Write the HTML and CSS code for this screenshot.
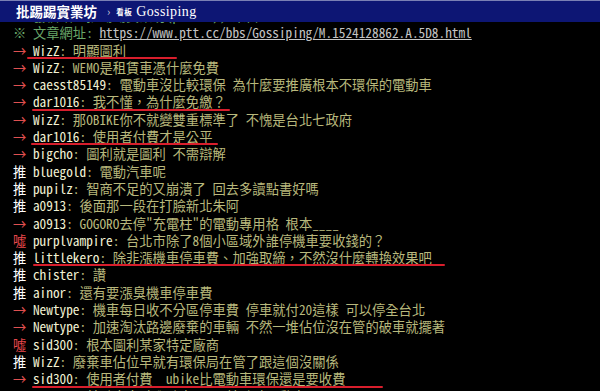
FILE: index.html
```html
<!DOCTYPE html>
<html lang="zh-Hant">
<head>
    <meta charset="UTF-8">
    <title>批踢踢實業坊 › 看板 Gossiping</title>
    <link rel="stylesheet" href="styles.css">
</head>
<body>

<header class="topbar">
    <a class="logo" href="#">批踢踢實業坊</a>
    <span class="sep">›</span>
    <a class="board" href="#"><span class="board-label">看板</span>Gossiping</a>
</header>

<div class="viewport">
<main class="article">
    <div class="line f2">※ 發信站: 批踢踢實業坊(ptt.cc), 來自: 180.177.40.55</div>
    <div class="line"><span class="f2">※ 文章網址: </span><a class="url" href="#">https://www.ptt.cc/bbs/Gossiping/M.1524128862.A.5D8.html</a></div>

    <div class="push ink ink-1"><span class="tag arrow">→ </span><span class="userid">WizZ</span><span class="content">: 明顯圖利</span></div>
    <div class="push"><span class="tag arrow">→ </span><span class="userid">WizZ</span><span class="content">: WEMO是租賃車憑什麼免費</span></div>
    <div class="push"><span class="tag arrow">→ </span><span class="userid">caesst85149</span><span class="content">: 電動車沒比較環保 為什麼要推廣根本不環保的電動車</span></div>
    <div class="push ink ink-2"><span class="tag arrow">→ </span><span class="userid">dar1016</span><span class="content">: 我不懂，為什麼免繳？</span></div>
    <div class="push"><span class="tag arrow">→ </span><span class="userid">WizZ</span><span class="content">: 那OBIKE你不就變雙重標準了 不愧是台北七政府</span></div>
    <div class="push ink ink-3"><span class="tag arrow">→ </span><span class="userid">dar1016</span><span class="content">: 使用者付費才是公平</span></div>
    <div class="push"><span class="tag arrow">→ </span><span class="userid">bigcho</span><span class="content">: 圖利就是圖利 不需辯解</span></div>
    <div class="push"><span class="tag">推 </span><span class="userid">bluegold</span><span class="content">: 電動汽車呢</span></div>
    <div class="push"><span class="tag">推 </span><span class="userid">pupilz</span><span class="content">: 智商不足的又崩潰了 回去多讀點書好嗎</span></div>
    <div class="push"><span class="tag">推 </span><span class="userid">a0913</span><span class="content">: 後面那一段在打臉新北朱阿</span></div>
    <div class="push"><span class="tag arrow">→ </span><span class="userid">a0913</span><span class="content">: GOGORO去停"充電柱"的電動專用格 根本____</span></div>
    <div class="push"><span class="tag boo">噓 </span><span class="userid">purplvampire</span><span class="content">: 台北市除了8個小區域外誰停機車要收錢的？</span></div>
    <div class="push ink ink-4"><span class="tag">推 </span><span class="userid">littlekero</span><span class="content">: 除非漲機車停車費、加強取締，不然沒什麼轉換效果吧</span></div>
    <div class="push"><span class="tag">推 </span><span class="userid">chister</span><span class="content">: 讚</span></div>
    <div class="push"><span class="tag">推 </span><span class="userid">ainor</span><span class="content">: 還有要漲臭機車停車費</span></div>
    <div class="push"><span class="tag arrow">→ </span><span class="userid">Newtype</span><span class="content">: 機車每日收不分區停車費 停車就付20這樣 可以停全台北</span></div>
    <div class="push"><span class="tag arrow">→ </span><span class="userid">Newtype</span><span class="content">: 加速淘汰路邊廢棄的車輛 不然一堆佔位沒在管的破車就擺著</span></div>
    <div class="push"><span class="tag boo">噓 </span><span class="userid">sid300</span><span class="content">: 根本圖利某家特定廠商</span></div>
    <div class="push"><span class="tag">推 </span><span class="userid">WizZ</span><span class="content">: 廢棄車佔位早就有環保局在管了跟這個沒關係</span></div>
    <div class="push ink ink-5"><span class="tag arrow">→ </span><span class="userid">sid300</span><span class="content">: 使用者付費  ubike比電動車環保還是要收費</span></div>
    <div class="push"><span class="tag arrow">→ </span><span class="userid">sid300</span><span class="content">: 鼓勵大家騎腳踏車 不是鼓勵騎電動車</span></div>
</main>
</div>

</body>
</html>
```
FILE: styles.css
```css
body {
    margin: 0;
    padding: 0;
    height: 391px;
    display: flex;
    flex-direction: column;
    background: #000;
    color: #bbb;
    font-family: "Noto Sans Mono CJK TC", "Noto Sans CJK TC", monospace;
    font-size: 13.3px;
    line-height: 17.3px;
    overflow: hidden;
}
a {
    color: inherit;
    text-decoration: none;
}
.topbar {
    flex: none;
    height: 21px;
    display: flex;
    align-items: center;
    padding-left: 16px;
    background: #0d1674;
    border-top: 1px solid #7a80b4;
    color: #fff;
}
.topbar .logo {
    font-family: "Noto Sans CJK TC", sans-serif;
    font-size: 13.5px;
    font-weight: bold;
}
.topbar .sep {
    margin: 0 6px 0 10px;
    font-size: 11px;
    color: #ccd;
}
.topbar .board {
    font-family: "Liberation Serif", serif;
    font-size: 14px;
    letter-spacing: 0.4px;
}
.board-label {
    font-family: "Noto Sans CJK TC", sans-serif;
    font-size: 7.5px;
    font-weight: bold;
    margin-right: 4px;
    vertical-align: 1px;
}
.viewport {
    flex: 1;
    overflow: hidden;
}
.article {
    margin-top: -15px;
    padding-left: 13px;
}
.line,
.push {
    position: relative;
    white-space: pre;
}
.f2 {
    color: #6aa86a;
}
.url {
    color: #c4c4c4;
    text-decoration: underline;
}
.tag {
    color: #fff;
}
.tag.arrow {
    color: #e05050;
}
.tag.boo {
    color: #e8484c;
}
.userid {
    color: #f2f2d4;
}
.content {
    color: #b8b87c;
}
.ink::after {
    content: "";
    position: absolute;
    bottom: 0;
    height: 2px;
    background: #d81e2c;
    border-radius: 1px;
}
.ink-1::after { width: 150px; left: 14px; }
.ink-2::after { width: 198px; left: 19px; }
.ink-3::after { width: 187px; left: 18px; }
.ink-4::after { width: 412px; left: 20px; }
.ink-5::after { width: 351px; left: 19px; }
```
